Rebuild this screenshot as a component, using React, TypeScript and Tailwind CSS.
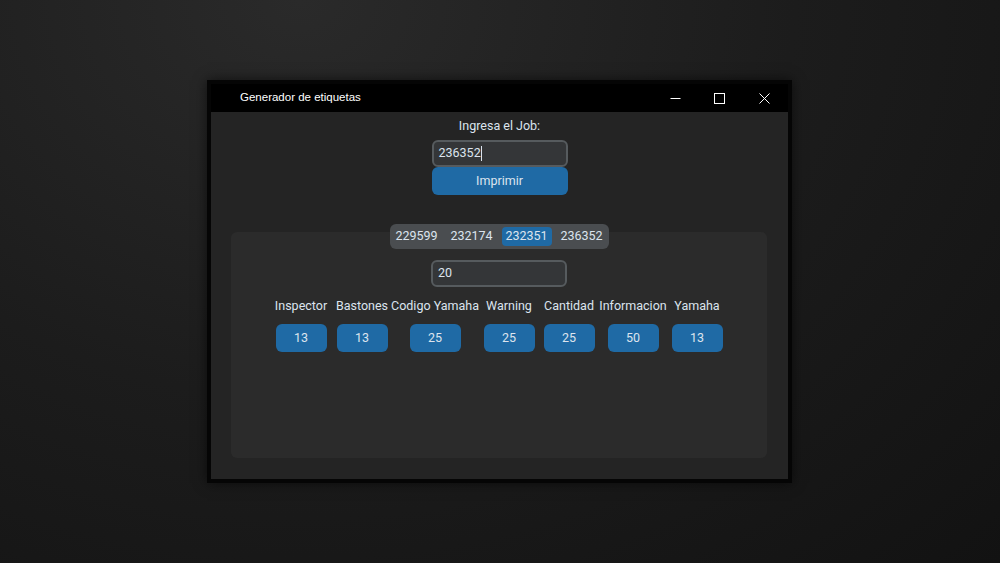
import React from "react";

const cols = [
  { label: "Inspector", value: "13", w: "w-[64px]" },
  { label: "Bastones", value: "13", w: "w-[58px]" },
  { label: "Codigo Yamaha", value: "25", w: "w-[88px]" },
  { label: "Warning", value: "25", w: "w-[60px]" },
  { label: "Cantidad", value: "25", w: "w-[60px]" },
  { label: "Informacion", value: "50", w: "w-[68px]" },
  { label: "Yamaha", value: "13", w: "w-[60px]" },
];

const jobs = ["229599", "232174", "232351", "236352"];

export default function App() {
  return (
    <div
      className="w-[1000px] h-[563px] flex items-center justify-center bg-[radial-gradient(ellipse_at_30%_0%,#2a2a2a_0%,#1c1c1c_50%,#121212_100%)]"
      style={{ fontFamily: "Roboto, 'Noto Sans', sans-serif" }}
    >
      <div className="mr-[1px] w-[585px] h-[403px] border-4 border-[#050505] bg-[#242424] flex flex-col shadow-[0_0_12px_rgba(0,0,0,0.6)]">
        {/* Title bar */}
        <div className="h-[28px] bg-black flex items-center shrink-0">
          <span
            className="ml-[29px] text-[11.5px] text-white"
            style={{ fontFamily: "'Liberation Sans', Arial, sans-serif" }}
          >
            Generador de etiquetas
          </span>
          <div className="ml-auto flex items-center h-full">
            <div className="w-[43px] h-full flex items-center justify-center">
              <svg width="11" height="11" viewBox="0 0 11 11">
                <line x1="0.5" y1="5.5" x2="10.5" y2="5.5" stroke="white" strokeWidth="1" />
              </svg>
            </div>
            <div className="w-[45px] h-full flex items-center justify-center">
              <svg width="11" height="11" viewBox="0 0 11 11">
                <rect x="0.5" y="0.5" width="10" height="10" fill="none" stroke="white" strokeWidth="1" />
              </svg>
            </div>
            <div className="w-[45px] h-full flex items-center justify-center mr-[1px]">
              <svg width="11" height="11" viewBox="0 0 11 11">
                <line x1="0.5" y1="0.5" x2="10.5" y2="10.5" stroke="white" strokeWidth="1" />
                <line x1="10.5" y1="0.5" x2="0.5" y2="10.5" stroke="white" strokeWidth="1" />
              </svg>
            </div>
          </div>
        </div>

        {/* Content */}
        <div className="flex-1 flex flex-col items-center pt-[6px] text-[12.5px] text-[#dce4ee]">
          <div className="h-[16px] leading-[16px]">Ingresa el Job:</div>
          <div className="mt-[6px] w-[136px] h-[27px] rounded-[6px] border-2 border-[#565b5e] bg-[#343638] flex items-center px-[5px]">
            <span>236352</span>
            <span className="w-[1px] h-[15px] bg-[#dce4ee]" />
          </div>
          <div className="w-[136px] h-[28px] rounded-[6px] bg-[#1f6aa5] flex items-center justify-center">
            Imprimir
          </div>

          {/* Tabview */}
          <div className="mt-[29px] mr-[1px] w-[536px] flex flex-col items-center">
            <div className="relative z-10 h-[25px] rounded-[6px] bg-[#4a4d50] flex items-center px-[2px] gap-[5px]">
              {jobs.map((j) => (
                <div
                  key={j}
                  className={
                    "w-[50px] h-[19px] rounded-[4px] flex items-center justify-center " +
                    (j === "232351" ? "bg-[#1f6aa5]" : "")
                  }
                >
                  {j}
                </div>
              ))}
            </div>
            <div className="-mt-[17px] w-[536px] h-[226px] rounded-[6px] bg-[#2b2b2b] flex flex-col items-center pt-[28px]">
              <div className="w-[136px] h-[27px] rounded-[6px] border-2 border-[#565b5e] bg-[#343638] flex items-center px-[5px]">
                20
              </div>
              <div className="mt-[11px] flex pr-[2px]">
                {cols.map((c) => (
                  <div key={c.label} className={"shrink-0 flex flex-col items-center " + c.w}>
                    <div className="h-[16px] leading-[16px] whitespace-nowrap">{c.label}</div>
                    <div className="mt-[10px] w-[51px] h-[28px] rounded-[6px] bg-[#1f6aa5] flex items-center justify-center">
                      {c.value}
                    </div>
                  </div>
                ))}
              </div>
            </div>
          </div>
        </div>
      </div>
    </div>
  );
}
